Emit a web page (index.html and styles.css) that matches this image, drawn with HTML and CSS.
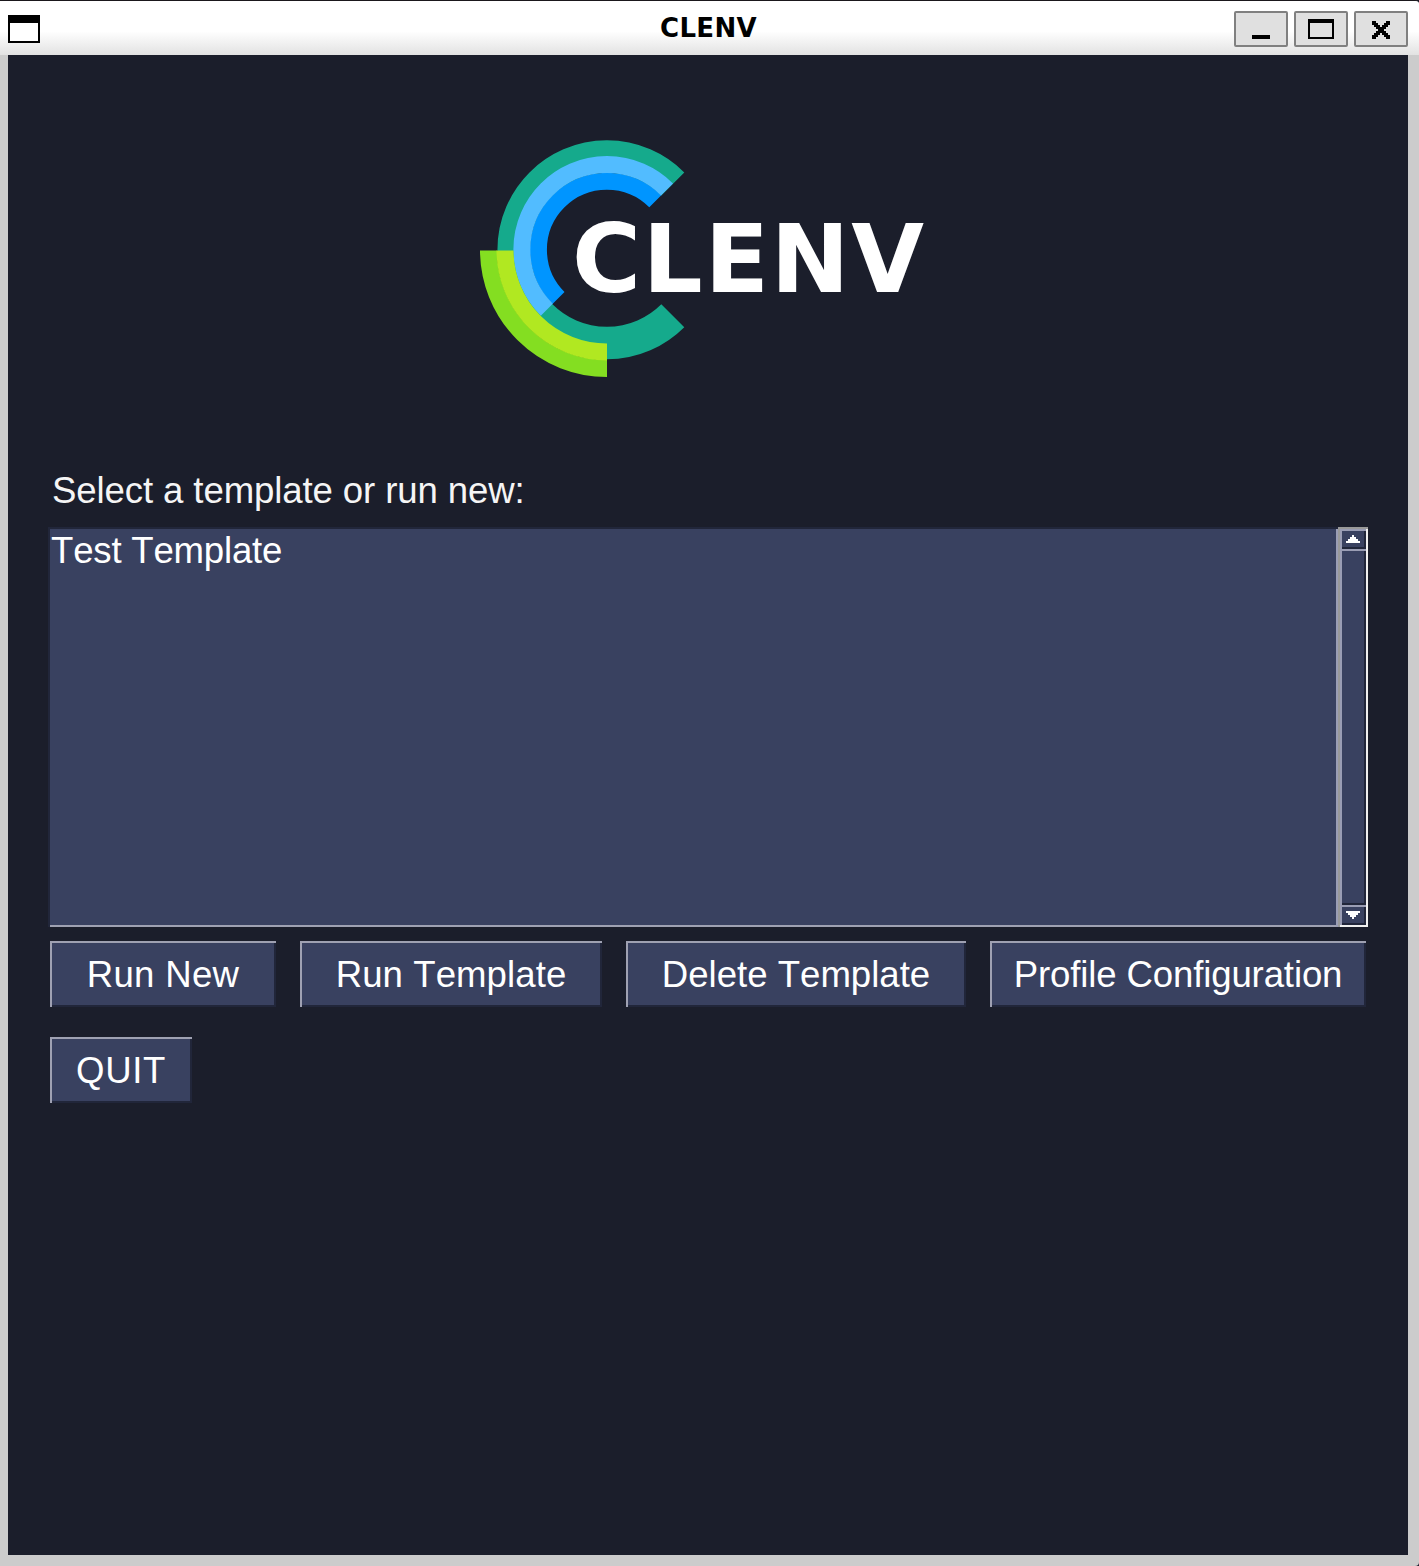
FILE: index.html
```html
<!DOCTYPE html>
<html lang="en">
<head>
<meta charset="utf-8">
<title>CLENV</title>
<link rel="stylesheet" href="styles.css">
</head>
<body>
<div class="window">
  <header class="titlebar">
    <svg class="app-icon" width="32" height="28" viewBox="0 0 32 28" shape-rendering="crispEdges"><path d="M0 0h32v28H0z"/><path fill="#fff" d="M2 8h28v18H2z"/></svg>
    <h1 class="title">CLENV</h1>
    <div class="controls">
      <button class="control" aria-label="Minimize"><svg width="54" height="36" viewBox="0 0 54 36" shape-rendering="crispEdges"><path d="M18 24h18v4H18z"/></svg></button>
      <button class="control" aria-label="Maximize"><svg width="54" height="36" viewBox="0 0 54 36" shape-rendering="crispEdges"><path fill-rule="evenodd" d="M14 8h26v20H14zM16 12v14h22V12z"/></svg></button>
      <button class="control" aria-label="Close"><svg width="54" height="36" viewBox="0 0 54 36" shape-rendering="crispEdges"><path d="M18 10h4v2h-4zM32 10h4v2h-4zM18 12h6v2h-6zM30 12h6v2h-6zM20 14h6v2h-6zM28 14h6v2h-6zM22 16h10v2H22zM24 18h6v2h-6zM22 20h10v2H22zM20 22h6v2h-6zM28 22h6v2h-6zM18 24h6v2h-6zM30 24h6v2h-6zM18 26h4v2h-4zM32 26h4v2h-4z"/></svg></button>
    </div>
  </header>
  <main class="content">
    <div class="brand">
      <svg width="460" height="250" viewBox="475 133 460 250" role="img" aria-label="CLENV">
        <g fill="none">
          <path stroke="#15aa8c" stroke-width="32.5" d="M672.8 183.9A93.2 93.2 0 1 0 672.8 315.7"/>
          <path stroke="#0095ff" stroke-width="17" d="M655.3 201.2A68.4 68.4 0 1 0 558.5 298"/>
          <path stroke="#52bcff" stroke-width="17" d="M667 189.5A84.9 84.9 0 1 0 546.8 309.7"/>
          <path stroke="#84de21" stroke-width="17" d="M488.5 250.5A118.5 118.5 0 0 0 607 368.5"/>
          <path stroke="#b1e821" stroke-width="17" d="M505 250.5A102 102 0 0 0 607 352"/>
        </g>
        <text class="wordmark" x="572" y="291.5" textLength="352" lengthAdjust="spacing">CLENV</text>
      </svg>
    </div>
    <p class="label">Select a template or run new:</p>
    <div class="list-row">
      <ul class="listbox"><li>Test Template</li></ul>
      <div class="scrollbar">
        <div class="arrow"><svg width="26" height="20" viewBox="0 0 26 20" shape-rendering="crispEdges"><path fill="#fff" d="M12 6h2v2h2v2h2v2h2v2H6v-2h2v-2h2V8h2z"/></svg></div>
        <div class="thumb"></div>
        <div class="arrow"><svg width="26" height="20" viewBox="0 0 26 20" shape-rendering="crispEdges"><path fill="#fff" d="M6 6h14v2h-2v2h-2v2h-2v2h-2v-2h-2v-2H8V8H6z"/></svg></div>
      </div>
    </div>
    <div class="buttons">
      <button class="btn new">Run New</button>
      <button class="btn run">Run Template</button>
      <button class="btn delete">Delete Template</button>
      <button class="btn profile">Profile Configuration</button>
      <button class="btn quit">QUIT</button>
    </div>
  </main>
</div>
</body>
</html>
```
FILE: styles.css
```css
* { box-sizing: border-box; margin: 0; padding: 0; }
body { background: #1b1e2b; }
svg { display: block; }
.window {
  height: 1566px;
  display: flex;
  flex-direction: column;
  background: #cccccc;
  border-top: 1px solid #1a171b;
  border-radius: 0 4px 4px 0;
  overflow: hidden;
}
.titlebar {
  height: 54px;
  display: grid;
  grid-template-columns: 200px 1fr 200px;
  align-items: center;
  padding: 0 11px 0 8px;
  background: linear-gradient(#fff 56%, #e2e2e2);
}
.app-icon { margin-top: 2px; }
.title {
  font: bold 26px/30px "DejaVu Sans", sans-serif;
  letter-spacing: 0.3px;
  padding-left: 1px;
  text-align: center;
  color: #000;
}
.controls { display: flex; gap: 6px; justify-content: flex-end; padding-top: 2px; }
.control {
  width: 54px;
  height: 36px;
  border: 2px solid #808080;
  border-radius: 2px;
  background: #e0e0e0;
}
.control svg { margin: -2px; }
.content {
  width: 1400px;
  height: 1500px;
  margin-left: 8px;
  padding: 78px 40px 0;
  background: #1b1e2b;
  font: 36.6px/42px "Liberation Sans", Arial, sans-serif;
  font-kerning: none;
  color: #fff;
}
.brand { padding-left: 427px; height: 337px; }
.wordmark { font: bold 94px "DejaVu Sans", sans-serif; fill: #fff; }
.label { padding-left: 4px; height: 57px; letter-spacing: -0.11px; color: #f5f5f5; }
.list-row { display: flex; height: 400px; }
.listbox {
  width: 1290px;
  list-style: none;
  background: #394160;
  padding: 3px 0 0 3px;
  letter-spacing: -0.2px;
  box-shadow: inset 2px 0 #21263a, inset 0 2px #21263a, inset -2px 0 #9a9db4, inset 0 -2px #9fa1b2;
}
.scrollbar {
  width: 30px;
  display: flex;
  flex-direction: column;
  padding: 2px;
  background: #394160;
  box-shadow: inset 2px 0 #999, inset 0 2px #999, inset -2px -2px #f0f0f0;
}
.arrow, .thumb {
  background: #394160;
  box-shadow: inset 2px 0 #9a9db4, inset 0 2px #9a9db4, inset -2px -2px #21263a;
}
.arrow { height: 20px; }
.thumb { flex: 1; }
.buttons { display: flex; flex-wrap: wrap; gap: 30px 24px; padding: 14px 0 0 2px; }
.btn {
  height: 66px;
  padding-top: 2px;
  font: inherit;
  font-kerning: none;
  color: #fff;
  background: #394160;
  border: 0;
  box-shadow: inset 2px 0 #9fa1b2, inset 0 2px #9fa1b2, inset -2px -2px #21263a;
}
.new { width: 226px; letter-spacing: 0.3px; }
.run { width: 302px; letter-spacing: 0.08px; }
.delete { width: 340px; letter-spacing: 0; }
.profile { width: 376px; margin-right: -10px; letter-spacing: -0.13px; }
.quit { width: 142px; letter-spacing: 0.6px; }
```
